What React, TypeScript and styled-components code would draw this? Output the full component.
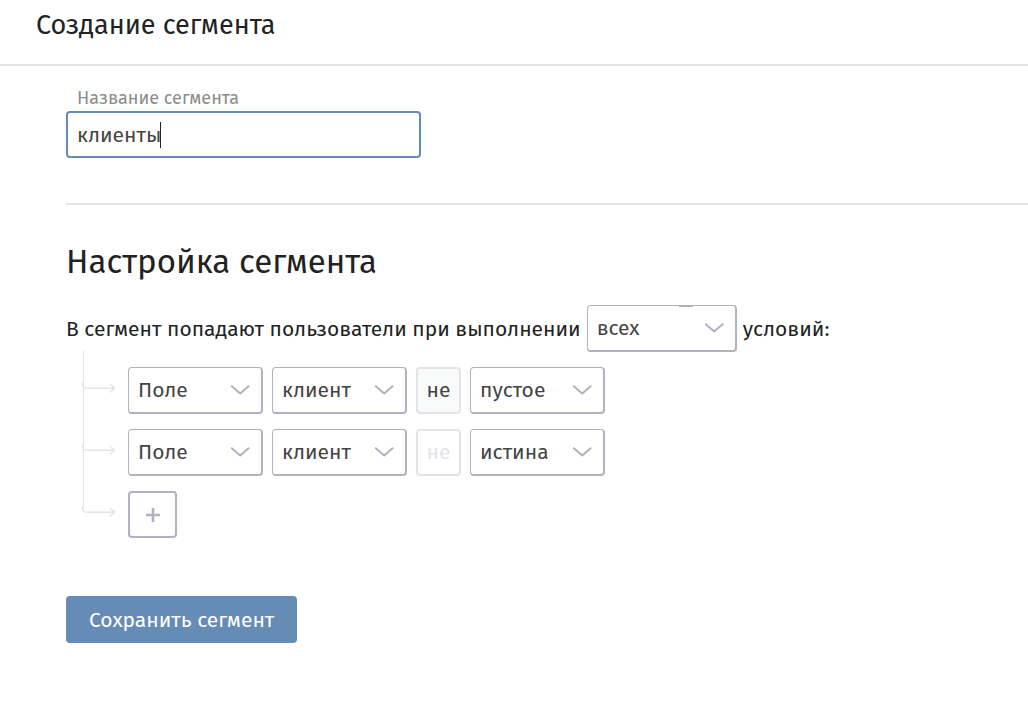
import { useState } from 'react';
import type { ReactNode } from 'react';
import styled, { createGlobalStyle } from 'styled-components';

interface Condition {
  id: number;
  source: string;
  field: string;
  negated: boolean;
  check: string;
}

const initialName = 'клиенты';

const GlobalStyle = createGlobalStyle`
  * {
    box-sizing: border-box;
  }

  body {
    margin: 0;
    background-color: #ffffff;
    color: #222222;
    font-family: 'Fira Sans', 'Noto Sans', sans-serif;
    font-size: 21px;
    line-height: 28px;
  }

  button,
  input,
  select {
    font: inherit;
  }
`;

const Header = styled.header`
  padding: 7px 36px 21px;
  border-bottom: 2px solid #e3e3e9;
`;

const PageTitle = styled.h1`
  margin: 0;
  font-size: 27px;
  font-weight: 400;
  line-height: 36px;
`;

const Content = styled.main`
  padding: 20px 0 48px 66px;
`;

const NameSection = styled.section`
  padding-bottom: 45px;
  border-bottom: 2px solid #e3e3e9;
`;

const NameLabel = styled.label`
  display: block;
  padding: 0 11px;
  color: #8b8b8b;
  font-size: 18px;
  line-height: 25px;
`;

const NameField = styled.div`
  position: relative;
  width: 355px;
  max-width: 100%;
`;

const NameInput = styled.input<{ $customCaret: boolean }>`
  display: block;
  width: 100%;
  height: 47px;
  padding: 0 9px;
  border: 2px solid #668bb8;
  border-radius: 4px;
  outline: none;
  background-color: #ffffff;
  color: #444444;
  caret-color: ${({ $customCaret }) => ($customCaret ? 'transparent' : '#222222')};
`;

const Caret = styled.span`
  position: absolute;
  top: 11px;
  left: 94px;
  width: 1px;
  height: 26px;
  background-color: #222222;
  pointer-events: none;
`;

const SectionTitle = styled.h2`
  margin: 0;
  padding: 34px 0 20px;
  font-size: 33px;
  font-weight: 400;
  line-height: 46px;
`;

const MatchRow = styled.div`
  display: flex;
  align-items: center;
  gap: 6px;
`;

const SelectBox = styled.span<{ $width: number }>`
  display: block;
  position: relative;
  width: ${({ $width }) => $width}px;
`;

const Select = styled.select`
  display: block;
  width: 100%;
  height: 47px;
  padding: 0 36px 0 9px;
  border: 1px solid #b0b1c1;
  border-right-width: 2px;
  border-bottom-width: 2px;
  border-radius: 4px;
  appearance: none;
  background-color: #ffffff;
  color: #444444;
`;

const Chevron = styled.svg`
  position: absolute;
  top: 18px;
  right: 13px;
  pointer-events: none;
`;

const Notch = styled.span`
  position: absolute;
  top: 1px;
  right: 44px;
  width: 14px;
  height: 1px;
  background-color: #b0b1c1;
`;

const ConditionList = styled.ul`
  margin: 0;
  padding: 0 0 0 15px;
  list-style: none;
`;

const ConditionItem = styled.li`
  display: flex;
  align-items: flex-end;
  gap: 9px;
  height: 62px;
`;

const Branch = styled.svg`
  flex: none;
  overflow: visible;
`;

const NotButton = styled.button<{ $active: boolean }>`
  width: 45px;
  height: 47px;
  padding: 0 0 2px;
  border: 2px solid #e3e3e9;
  border-radius: 4px;
  background-color: ${({ $active }) => ($active ? '#f9fafa' : '#ffffff')};
  color: ${({ $active }) => ($active ? '#444444' : '#e3e3e9')};
`;

const AddButton = styled.button`
  display: flex;
  align-items: center;
  justify-content: center;
  width: 49px;
  height: 47px;
  padding: 0;
  border: 2px solid #b0b1c1;
  border-radius: 4px;
  background-color: #ffffff;
`;

const SaveButton = styled.button`
  margin-top: 58px;
  height: 47px;
  padding: 0 23px;
  border: 0;
  border-radius: 4px;
  background-color: #668bb5;
  color: #ffffff;
`;

interface DropdownProps {
  label: string;
  value: string;
  options: string[];
  width?: number;
  onChange: (value: string) => void;
  children?: ReactNode;
}

const Dropdown = ({ label, value, options, width = 135, onChange, children }: DropdownProps) => (
  <SelectBox $width={width}>
    <Select aria-label={label} value={value} onChange={(e) => onChange(e.target.value)}>
      {options.map((option) => (
        <option key={option}>{option}</option>
      ))}
    </Select>
    <Chevron width="20" height="12" viewBox="0 0 20 12" fill="none" stroke="#b0b1c1" strokeWidth="2">
      <path d="M1.8 1.2 L10.2 8.4 L18.6 1.2" strokeLinecap="round" strokeLinejoin="round" />
    </Chevron>
    {children}
  </SelectBox>
);

const BranchArrow = ({ last = false }: { last?: boolean }) => (
  <Branch width="38" height="62" viewBox="0 0 38 62" fill="none" stroke="#e3e3e9">
    <path d={last ? 'M2.5 -2 V32' : 'M2.5 -2 V62'} />
    <path
      d="M1.5 31 V32 C1.5 34.8 3 36.2 6 36.2 H33 M29.5 32.4 L33.5 36.2 L29.5 40"
      strokeWidth="1.4"
      strokeLinecap="round"
      strokeLinejoin="round"
    />
  </Branch>
);

const App = () => {
  const [name, setName] = useState(initialName);
  const [match, setMatch] = useState('всех');
  const [conditions, setConditions] = useState<Condition[]>([
    { id: 1, source: 'Поле', field: 'клиент', negated: true, check: 'пустое' },
    { id: 2, source: 'Поле', field: 'клиент', negated: false, check: 'истина' },
  ]);

  // the steady caret is only shown until the name is edited
  const untouched = name === initialName;

  const update = (id: number, patch: Partial<Condition>) => {
    setConditions(conditions.map((c) => (c.id === id ? { ...c, ...patch } : c)));
  };

  const addCondition = () => {
    setConditions([
      ...conditions,
      { id: conditions.length + 1, source: 'Поле', field: 'клиент', negated: false, check: 'пустое' },
    ]);
  };

  return (
    <>
      <GlobalStyle />
      <Header>
        <PageTitle>Создание сегмента</PageTitle>
      </Header>
      <Content>
        <NameSection>
          <NameLabel htmlFor="segment-name">Название сегмента</NameLabel>
          <NameField>
            <NameInput
              id="segment-name"
              type="text"
              autoFocus
              $customCaret={untouched}
              value={name}
              onChange={(e) => setName(e.target.value)}
            />
            {untouched && <Caret />}
          </NameField>
        </NameSection>
        <SectionTitle>Настройка сегмента</SectionTitle>
        <MatchRow>
          <span>В сегмент попадают пользователи при выполнении</span>
          <Dropdown label="Выполнение условий" value={match} options={['всех']} width={150} onChange={setMatch}>
            <Notch />
          </Dropdown>
          <span>условий:</span>
        </MatchRow>
        <ConditionList>
          {conditions.map((condition) => (
            <ConditionItem key={condition.id}>
              <BranchArrow />
              <Dropdown
                label="Источник"
                value={condition.source}
                options={['Поле']}
                onChange={(source) => update(condition.id, { source })}
              />
              <Dropdown
                label="Поле"
                value={condition.field}
                options={['клиент']}
                onChange={(field) => update(condition.id, { field })}
              />
              <NotButton
                type="button"
                $active={condition.negated}
                aria-pressed={condition.negated}
                onClick={() => update(condition.id, { negated: !condition.negated })}
              >
                не
              </NotButton>
              <Dropdown
                label="Проверка"
                value={condition.check}
                options={['пустое', 'истина']}
                onChange={(check) => update(condition.id, { check })}
              />
            </ConditionItem>
          ))}
          <ConditionItem>
            <BranchArrow last />
            <AddButton type="button" aria-label="Добавить условие" onClick={addCondition}>
              <svg width="14" height="14" viewBox="0 0 14 14" stroke="#b0b1c1" strokeWidth="2.6">
                <path d="M7 0 V14 M0 7 H14" />
              </svg>
            </AddButton>
          </ConditionItem>
        </ConditionList>
        <SaveButton type="button">Сохранить сегмент</SaveButton>
      </Content>
    </>
  );
};

export default App;
